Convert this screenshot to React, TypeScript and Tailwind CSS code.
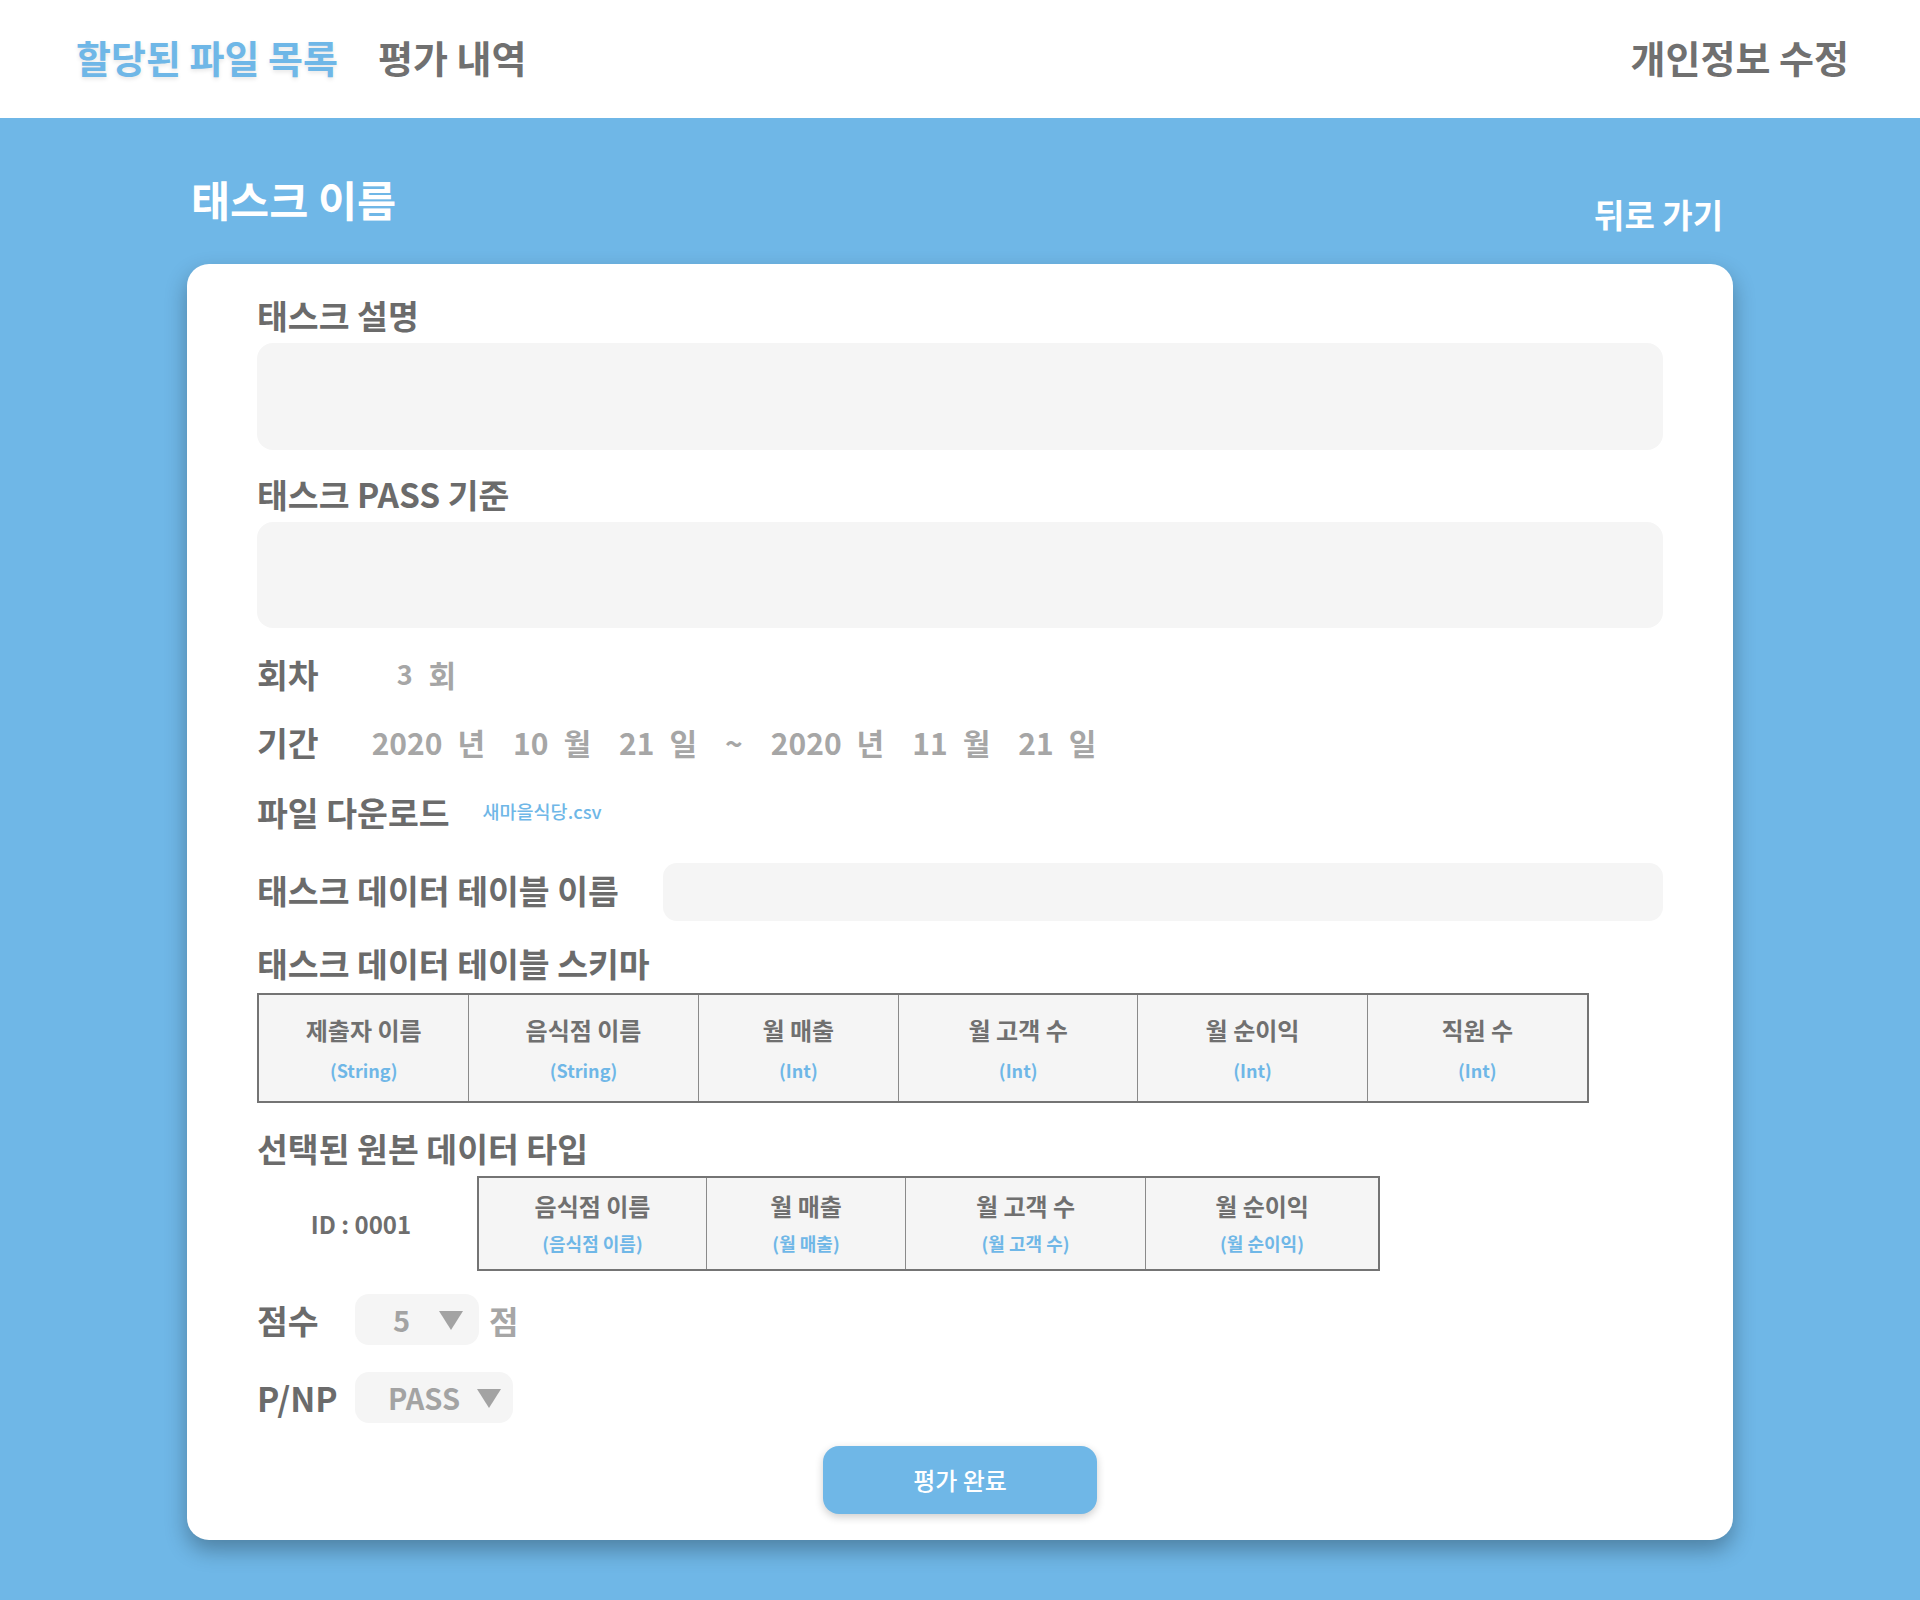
const schemaColumns = [
  { name: "제출자 이름", type: "(String)", width: "w-[211px]" },
  { name: "음식점 이름", type: "(String)", width: "w-[230px]" },
  { name: "월 매출", type: "(Int)", width: "w-[201px]" },
  { name: "월 고객 수", type: "(Int)", width: "w-[240px]" },
  { name: "월 순이익", type: "(Int)", width: "w-[230px]" },
  { name: "직원 수", type: "(Int)", width: "w-[220px]" },
];

const sourceColumns = [
  { name: "음식점 이름", type: "(음식점 이름)", width: "w-[229px]" },
  { name: "월 매출", type: "(월 매출)", width: "w-[200px]" },
  { name: "월 고객 수", type: "(월 고객 수)", width: "w-[241px]" },
  { name: "월 순이익", type: "(월 순이익)", width: "w-[233px]" },
];

const period = [
  ["2020", "년"],
  ["10", "월"],
  ["21", "일"],
];
const period2 = [
  ["2020", "년"],
  ["11", "월"],
  ["21", "일"],
];

const Triangle = () => (
  <svg width="26" height="22" viewBox="0 0 26 22" className="shrink-0">
    <polygon points="1,2 25,2 13,21" fill="#a3a3a3" />
  </svg>
);

const Label = ({ children, className = "" }: { children: React.ReactNode; className?: string }) => (
  <div className={"text-[33.5px] leading-[40px] font-bold text-[#6b6b6b] " + className}>{children}</div>
);

export default function App() {
  return (
    <div className="min-h-[1600px] bg-[#6fb7e7] font-['Noto_Sans_CJK_KR',sans-serif]">
      <header className="h-[118px] bg-white flex items-center justify-between pl-[76px] pr-[71px] pb-[6px]">
        <nav className="flex items-center gap-[40px] text-[38px] font-bold">
          <a href="#" className="text-[#6fb7e7] [text-shadow:0_2px_4px_rgba(0,0,0,0.1)]">
            할당된 파일 목록
          </a>
          <a href="#" className="text-[#707070]">
            평가 내역
          </a>
        </nav>
        <a href="#" className="text-[38px] font-bold text-[#707070]">
          개인정보 수정
        </a>
      </header>

      <main className="w-[1546px] mx-auto pt-[57px] pb-[62px]">
        <div className="flex justify-between items-start">
          <h1 className="pl-[4px] text-[42.5px] leading-[48px] font-bold text-white">태스크 이름</h1>
          <a href="#" className="mt-[19px] pr-[10px] text-[33px] leading-[40px] font-bold text-white">
            뒤로 가기
          </a>
        </div>

        <section className="mt-[30px] bg-white rounded-[22px] shadow-[0_10px_22px_rgba(0,0,0,0.3)] pt-[31px] pb-[26px] px-[70px]">
          <Label>태스크 설명</Label>
          <div className="mt-[8px] h-[107px] rounded-[16px] bg-[#f5f5f5]" />

          <Label className="mt-[24px]">태스크 PASS 기준</Label>
          <div className="mt-[8px] h-[106px] rounded-[16px] bg-[#f5f5f5]" />

          <div className="mt-[26px] flex items-center h-[40px]">
            <Label>회차</Label>
            <div className="ml-[78px] text-[30px] font-bold text-[#a6a6a6] flex items-center gap-[16px]">
              <span className="text-[27px]">3</span>
              <span>회</span>
            </div>
          </div>

          <div className="mt-[28px] flex items-center h-[40px]">
            <Label>기간</Label>
            <div className="ml-[53px] flex items-center gap-[28px] text-[30px] font-bold text-[#a6a6a6]">
              {period.map(([n, u]) => (
                <span key={u} className="flex items-center gap-[15px]">
                  <span>{n}</span>
                  <span>{u}</span>
                </span>
              ))}
              <span>~</span>
              {period2.map(([n, u]) => (
                <span key={u} className="flex items-center gap-[15px]">
                  <span>{n}</span>
                  <span>{u}</span>
                </span>
              ))}
            </div>
          </div>

          <div className="mt-[30px] flex items-center h-[40px]">
            <Label>파일 다운로드</Label>
            <a href="#" className="ml-[33px] text-[18.5px] font-medium text-[#6fb7e7]">
              새마을식당.csv
            </a>
          </div>

          <div className="mt-[31px] flex items-center h-[58px]">
            <Label className="-mt-[4px]">태스크 데이터 테이블 이름</Label>
            <div className="ml-[44px] flex-1 h-[58px] rounded-[14px] bg-[#f5f5f5]" />
          </div>

          <Label className="mt-[22px]">태스크 데이터 테이블 스키마</Label>
          <div className="mt-[10px] flex w-[1332px] h-[110px] border-2 border-[#747474] bg-[#f5f5f5] divide-x divide-[#8a8a8a]">
            {schemaColumns.map((c) => (
              <div key={c.name} className={c.width + " flex flex-col items-center pt-[21px]"}>
                <span className="text-[24px] leading-[28px] font-bold text-[#707070]">{c.name}</span>
                <span className="mt-[14px] text-[18px] leading-[24px] font-bold text-[#6fb7e7]">{c.type}</span>
              </div>
            ))}
          </div>

          <Label className="mt-[25px]">선택된 원본 데이터 타입</Label>
          <div className="mt-[8px] flex items-center">
            <div className="w-[220px] pr-[12px] text-center text-[24px] font-bold text-[#6e6e6e]">ID : 0001</div>
            <div className="flex w-[903px] h-[95px] border-2 border-[#747474] bg-[#f5f5f5] divide-x divide-[#8a8a8a]">
              {sourceColumns.map((c) => (
                <div key={c.name} className={c.width + " flex flex-col items-center pt-[14px]"}>
                  <span className="text-[24px] leading-[28px] font-bold text-[#707070]">{c.name}</span>
                  <span className="mt-[11px] text-[18px] leading-[24px] font-bold text-[#6fb7e7]">{c.type}</span>
                </div>
              ))}
            </div>
          </div>

          <div className="mt-[23px] flex items-center h-[51px]">
            <Label className="w-[98px]">점수</Label>
            <div className="w-[124px] h-[51px] rounded-[14px] bg-[#f5f5f5] flex items-center justify-end gap-[28px] pr-[15px]">
              <span className="text-[29px] font-bold text-[#a3a3a3]">5</span>
              <Triangle />
            </div>
            <span className="ml-[10px] text-[32px] font-bold text-[#a6a6a6]">점</span>
          </div>

          <div className="mt-[27px] flex items-center h-[51px]">
            <Label className="w-[98px]">P/NP</Label>
            <div className="w-[158px] h-[51px] rounded-[14px] bg-[#f5f5f5] flex items-center justify-end gap-[16px] pr-[11px]">
              <span className="text-[29px] font-bold text-[#a3a3a3]">PASS</span>
              <Triangle />
            </div>
          </div>

          <div className="mt-[23px] flex justify-center">
            <button className="w-[274px] h-[68px] rounded-[16px] bg-[#6fb7e7] text-white text-[24px] font-medium shadow-[0_3px_8px_rgba(0,0,0,0.2)]">
              평가 완료
            </button>
          </div>
        </section>
      </main>
    </div>
  );
}
